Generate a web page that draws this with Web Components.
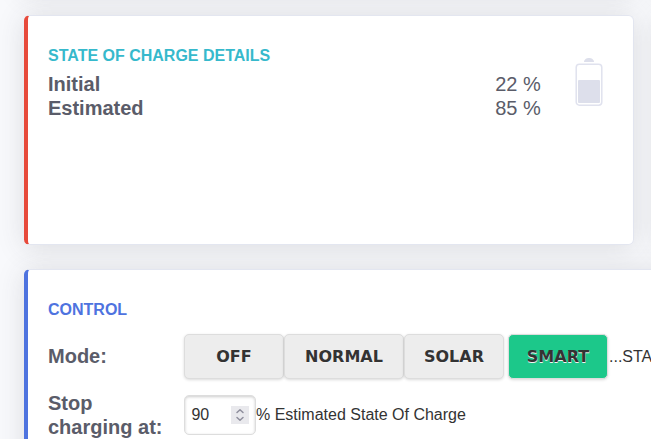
<!DOCTYPE html>
<html lang="en"><head><meta charset="utf-8"><title>Charging</title>
<style>
html,body{margin:0;height:100%;overflow:hidden}
body{background:#f8f9fc;font-family:"Liberation Sans",Arial,sans-serif;color:#333}
</style></head><body>
<charge-page></charge-page>
<script>
customElements.define('ui-card', class extends HTMLElement{
  constructor(){super();this.attachShadow({mode:'open'}).innerHTML=`
<style>
:host{display:block;box-sizing:border-box;background:#fff;border:1px solid #e3e6f0;border-left:4px solid var(--accent);border-radius:5.6px;box-shadow:0 2.4px 28px 0 rgba(58,59,69,.15);padding:28px 20px 0}
h2{margin:0 0 4px;font-size:16px;line-height:24px;font-weight:700;text-transform:uppercase;color:var(--title,var(--accent))}
h2:empty{display:none}
</style><h2></h2><slot></slot>`;}
  connectedCallback(){this.shadowRoot.querySelector('h2').textContent=this.getAttribute('heading')||'';}
});
customElements.define('battery-icon', class extends HTMLElement{
  constructor(){super();this.attachShadow({mode:'open'}).innerHTML=`
<style>:host{display:block;width:28px;height:49px}svg{display:block}</style>
<svg width="28" height="49" viewBox="0 0 28 49"><path d="M9 5C9 2.500 11.500 1 14 1S19 2.500 19 5Z" fill="#dddfeb"/><rect x="1.200" y="7.200" width="25.600" height="41" rx="3.200" fill="#fff" stroke="#e0e2ee" stroke-width="1.500"/><rect x="3" y="23" width="22" height="23" rx="1" fill="#dddfeb"/></svg>`;}
});
customElements.define('stat-row', class extends HTMLElement{
  constructor(){super();this.attachShadow({mode:'open'}).innerHTML=`
<style>:host{display:flex;justify-content:space-between;font-size:20px;line-height:24px;color:#5a5c69}b{font-weight:700}</style>
<b></b><span><slot></slot></span>`;}
  connectedCallback(){this.shadowRoot.querySelector('b').textContent=this.getAttribute('label');}
});
customElements.define('mode-button', class extends HTMLElement{
  constructor(){super();this.attachShadow({mode:'open'}).innerHTML=`
<style>
:host{display:block;flex:none;width:100px}
:host([wide]){width:120px}
:host([active]){margin-left:4px}
button{display:block;box-sizing:border-box;width:100%;height:45px;margin:0;padding:1px 0 0;border:1px solid #ddd;border-radius:5px;background:#ededed;color:#333;font:700 16px/20.800px "DejaVu Sans",sans-serif;text-shadow:0 1px 0 #f3f3f3;box-shadow:0 1px 3px rgba(0,0,0,.15)}
:host([active]) button{background:#1cc88a;}
</style><button><slot></slot></button>`;}
});
customElements.define('number-field', class extends HTMLElement{
  constructor(){super();this.attachShadow({mode:'open'}).innerHTML=`
<style>
:host{display:flex;flex:none;box-sizing:border-box;width:72px;height:40px;border:1px solid #ddd;border-radius:5px;background:#fff;box-shadow:inset 0 1px 3px rgba(0,0,0,.2);align-items:center;justify-content:space-between;padding:0 6px 0 6.400px;font-size:16px}
svg{display:block;background:#e9e9ed}
</style><span><slot></slot></span><svg width="18" height="18" viewBox="0 0 18 18" fill="none" stroke="#8f8f9d" stroke-width="1.500" stroke-linecap="round" stroke-linejoin="round"><path d="M6 6.500L9 3.700l3 2.800M6 11.500l3 2.800 3-2.800"/></svg>`;}
});
customElements.define('form-row', class extends HTMLElement{
  constructor(){super();this.attachShadow({mode:'open'}).innerHTML=`
<style>:host{display:grid;grid-template-columns:120px 1fr;column-gap:16px;align-items:center;white-space:nowrap;font-size:16px;line-height:24px}
b{font-size:20px;color:#5a5c69;white-space:normal;padding-bottom:var(--label-lift,0)}div{display:flex;align-items:center}</style>
<b></b><div><slot></slot></div>`;}
  connectedCallback(){this.shadowRoot.querySelector('b').textContent=this.getAttribute('label');}
});
customElements.define('charge-page', class extends HTMLElement{
  constructor(){super();this.attachShadow({mode:'open'}).innerHTML=`
<style>
:host{display:block;height:439px;overflow:hidden}
main{margin:-239px 0 0 24px;width:1244px;display:grid;grid-template-columns:610px 610px;gap:24px}
.soc{--accent:#e74a3b;--title:#36b9cc}
.control{--accent:#4e73df;grid-column:1/3;height:300px}
ui-card{height:230px}
.layout{display:flex}
.stats{width:492.800px}
battery-icon{margin:-15px 0 0 34.200px}
.mode{height:45px;margin-top:12px;--label-lift:2px}
.limit{margin-top:12px}
.state{margin-left:1px}
</style>
<main>
<ui-card class="soc"></ui-card><ui-card class="soc"></ui-card>
<ui-card class="soc" heading="State of charge details"><div class="layout"><div class="stats"><stat-row label="Initial">22 %</stat-row><stat-row label="Estimated">85 %</stat-row></div><battery-icon></battery-icon></div></ui-card>
<ui-card class="soc"></ui-card>
<ui-card class="control" heading="Control">
<form-row class="mode" label="Mode:"><mode-button>OFF</mode-button><mode-button wide>NORMAL</mode-button><mode-button>SOLAR</mode-button><mode-button active>SMART</mode-button><span class="state">...STA</span></form-row>
<form-row class="limit" label="Stop charging at:"><number-field>90</number-field><span>% Estimated State Of Charge</span></form-row>
</ui-card>
</main>`;}
});
</script></body></html>
